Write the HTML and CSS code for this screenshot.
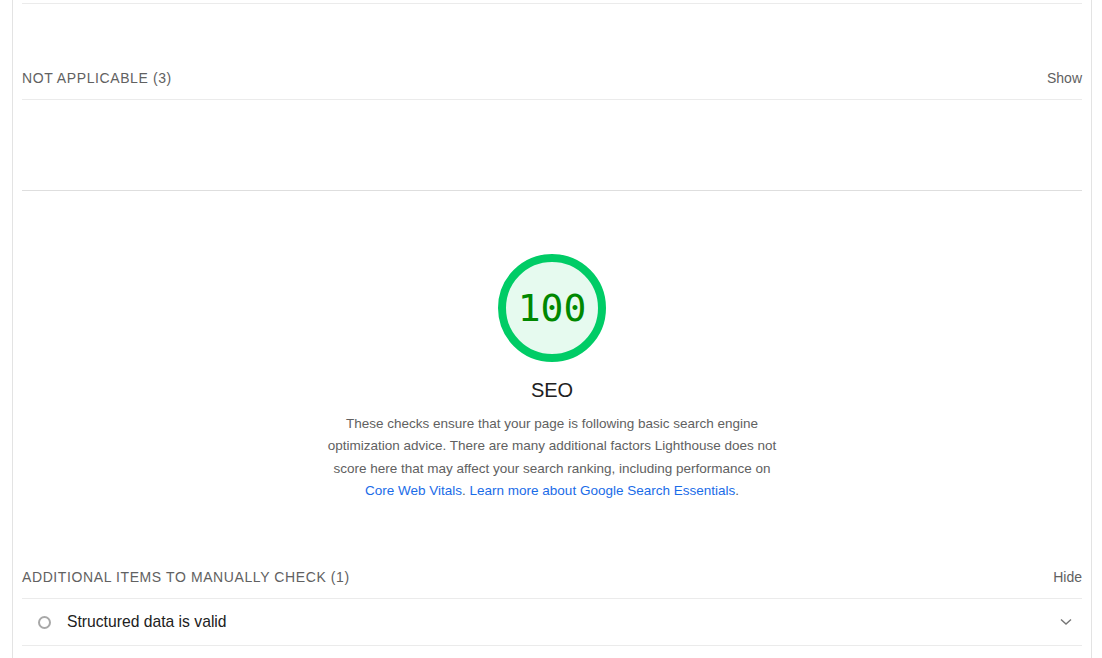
FILE: index.html
```html
<!DOCTYPE html>
<html>
<head>
<meta charset="utf-8">
<link rel="stylesheet" href="styles.css">
</head>
<body>
<div class="report">
  <div class="sep first"></div>
  <div class="group-head">
    <span class="group-title">Not applicable (3)</span>
    <span class="toggle">Show</span>
  </div>
  <div class="empty-group"></div>
  <div class="category">
    <div class="gauge">
      <svg class="gauge-svg" viewBox="0 0 108 108" width="108" height="108">
        <circle cx="54" cy="54" r="50" fill="#e6faef" stroke="#00cc66" stroke-width="8"/>
      </svg>
      <span class="gauge-value">100</span>
    </div>
    <div class="cat-title">SEO</div>
    <p class="cat-desc">These checks ensure that your page is following basic search engine optimization advice. There are many additional factors Lighthouse does not score here that may affect your search ranking, including performance on <a class="link" href="#">Core Web Vitals</a>. <a class="link" href="#">Learn more about Google Search Essentials</a>.</p>
  </div>
  <div class="group-head manual">
    <span class="group-title">Additional items to manually check (1)</span>
    <span class="toggle">Hide</span>
  </div>
  <div class="audit">
    <span class="audit-icon"></span>
    <span class="audit-title">Structured data is valid</span>
    <svg class="chevron" viewBox="0 0 12 8" width="12" height="8">
      <path d="M1 1.5 L6 6 L11 1.5" fill="none" stroke="#757575" stroke-width="1.4"/>
    </svg>
  </div>
</div>
</body>
</html>
```
FILE: styles.css
```css
html, body {
  margin: 0;
  padding: 0;
  background: #fff;
}
body {
  font-family: "Liberation Sans", Arial, sans-serif;
  color: #212121;
}
.report {
  margin-left: 12px;
  width: 1080px;
  height: 658px;
  overflow: hidden;
  box-sizing: border-box;
  border-left: 1px solid #e3e3e3;
  border-right: 1px solid #e3e3e3;
  padding: 0 9px;
}
.sep {
  height: 1px;
  background: #ebebeb;
}
.sep.first {
  margin-top: 3px;
}
.group-head {
  display: flex;
  justify-content: space-between;
  align-items: center;
  padding-top: 64px;
  padding-bottom: 11px;
  border-bottom: 1px solid #ebebeb;
  line-height: 20px;
}
.group-title {
  font-size: 14px;
  text-transform: uppercase;
  letter-spacing: 0.6px;
  color: #616161;
}
.toggle {
  font-size: 14px;
  color: #616161;
}
.empty-group {
  height: 90px;
  border-bottom: 1px solid #dedede;
}
.category {
  display: flex;
  flex-direction: column;
  align-items: center;
  padding-top: 63px;
}
.gauge {
  position: relative;
  width: 108px;
  height: 108px;
}
.gauge-svg {
  display: block;
}
.gauge-value {
  position: absolute;
  left: 0;
  right: 0;
  top: 0;
  bottom: 0;
  display: flex;
  align-items: center;
  justify-content: center;
  font-family: "DejaVu Sans Mono", "Liberation Mono", monospace;
  font-size: 38px;
  color: #008800;
}
.cat-title {
  margin-top: 16px;
  font-size: 20px;
  line-height: 24px;
  color: #212121;
}
.cat-desc {
  margin: 11px 0 0;
  width: 452px;
  text-align: center;
  font-size: 13.5px;
  line-height: 22.3px;
  color: #616161;
}
.link {
  color: #1a6ce8;
  text-decoration: none;
}
.group-head.manual {
  padding-top: 65px;
}
.audit {
  display: flex;
  align-items: center;
  height: 46px;
  border-bottom: 1px solid #ebebeb;
  padding-left: 16px;
  padding-right: 10px;
}
.audit-icon {
  width: 9px;
  height: 9px;
  border: 2px solid #a8a8a8;
  border-radius: 50%;
  margin-right: 16px;
}
.audit-title {
  flex: 1;
  font-size: 15.7px;
  color: #212121;
}
.chevron {
  display: block;
}
```
